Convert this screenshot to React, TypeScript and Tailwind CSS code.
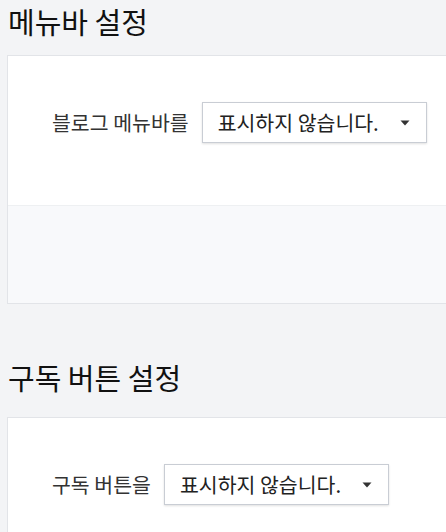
const font = { fontFamily: '"Noto Sans CJK KR", "Noto Sans", sans-serif' };

type SettingProps = {
  title: string;
  label: string;
  value: string;
  footer?: boolean;
  className?: string;
  headClass?: string;
};

const Caret = () => (
  <svg width="10" height="6" viewBox="0 0 10 6" className="shrink-0">
    <path d="M0.5 0.5 H9.5 L5 5.5 Z" fill="#333" />
  </svg>
);

const SettingSection = ({ title, label, value, footer, className, headClass }: SettingProps) => (
  <section className={className}>
    <h2 className={`${headClass ?? "h-[55px]"} pt-px text-[29px] leading-[40px] text-[#111] pl-px`}>{title}</h2>
    <div className="w-[470px] border border-[#e2e4e8] bg-white">
      <div className="flex items-center gap-[13px] pl-[44px] pt-[46px] pb-[62px]">
        <span className="text-[20.5px] text-[#333]">{label}</span>
        <div className="flex h-[41px] w-[225px] items-center justify-between border border-[#c9cdd4] bg-white pl-[15px] pr-[16px] shadow-[0_1px_2px_rgba(0,0,0,0.12)]">
          <span className="text-[20.5px] text-[#222]">{value}</span>
          <Caret />
        </div>
      </div>
      {footer && <div className="h-[98px] border-t border-[#eef0f2] bg-[#f8f9fb]" />}
    </div>
  </section>
);

export default function App() {
  return (
    <div className="h-screen overflow-hidden bg-[#f3f4f6] pl-[7px]" style={font}>
      <SettingSection
        title="메뉴바 설정"
        label="블로그 메뉴바를"
        value="표시하지 않습니다."
        footer
      />
      <SettingSection
        className="mt-[52px]"
        headClass="h-[61px]"
        title="구독 버튼 설정"
        label="구독 버튼을"
        value="표시하지 않습니다."
      />
    </div>
  );
}
